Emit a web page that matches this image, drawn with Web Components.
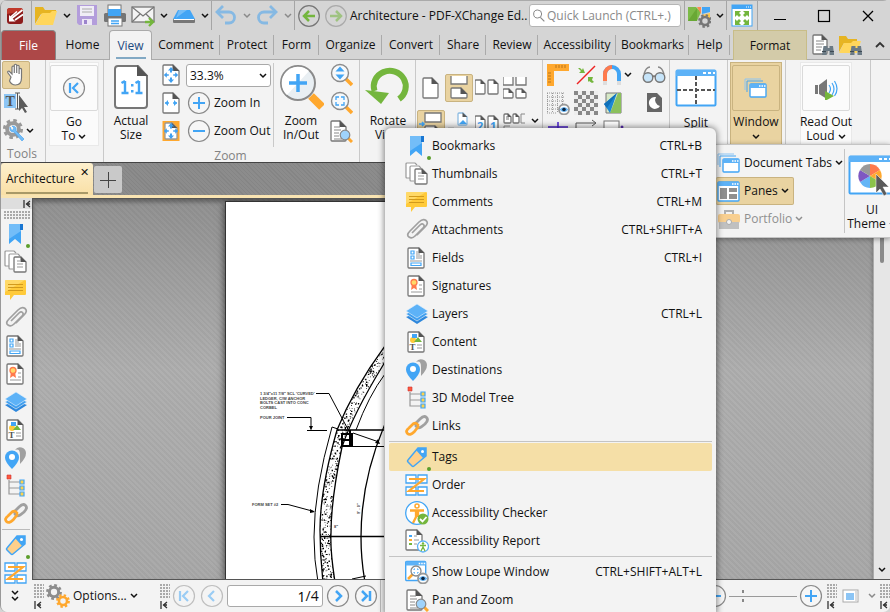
<!DOCTYPE html>
<html lang="en">
<head>
<meta charset="utf-8">
<title>Architecture - PDF-XChange Editor</title>
<style>
html,body{height:100%;margin:0;overflow:hidden;background:#d5d5d5}
body{font:12px/14px "Open Sans","Noto Sans",sans-serif;color:#111}
</style>
</head>
<body>
<px-app></px-app>
<script>
const page=(x,y,w,h,f=6,s='#777')=>`<path d="M${x+1} ${y}h${w-f-1}l${f} ${f}v${h-f-1}q0 1-1 1h${-(w-2)}q-1 0-1-1v${-(h-2)}q0-1 1-1z" fill="#fff" stroke="${s}" stroke-width="1.3"/><path d="M${x+w-f-.5} ${y-.5}v${f+.5}h${f+.8}z" fill="#555"/>`;
const moves=(c='#3f9ff0')=>`<path d="M12 4l3 3.5h-2v2h-2v-2H9zM12 20l3-3.500h-2v-2h-2v2H9zM4.800 12l3-2.800v2h2v1.600h-2v2zM19.200 12l-3-2.800v2h-2v1.600h2v2z" fill="${c}"/>`;
const lens=(x,y,r)=>`<circle cx="${x}" cy="${y}" r="${r}" fill="#f6f9fb" stroke="#8b8b8b" stroke-width="1.4"/>`;
const win=(x,y,w,h)=>`<rect x="${x}" y="${y}" width="${w}" height="${h}" rx="1" fill="#fff" stroke="#42a5f5" stroke-width="1.4"/><path d="M${x} ${y}h${w}v4h${-w}z" fill="#5db2f7"/><path d="M${x+w-7} ${y+2}h1.500m1 0h1.500m1 0h1.500" stroke="#fff" stroke-width="1.300"/>`;
const ring=(o=1)=>`<circle cx="12" cy="12" r="10.500" fill="#f6f6f6" stroke="#8a8a8a" stroke-width="1.200" opacity="${o}"/>`;
const gear=(x,y,r,c,hole='#f3f3f3')=>`<circle cx="${x}" cy="${y}" r="${r*.82}" fill="${c}"/><circle cx="${x}" cy="${y}" r="${r*.88}" fill="none" stroke="${c}" stroke-width="${r*.36}" stroke-dasharray="${r*.36} ${r*.331}"/><circle cx="${x}" cy="${y}" r="${r*.42}" fill="${hole}"/>`;
const eye='<circle cx="18" cy="18.500" r="5" fill="#fff" stroke="#999" stroke-width="1.800"/><path d="M13.500 18.500q4.500-5 9 0q-4.500 5-9 0z" fill="#69b7f5"/><circle cx="18" cy="18.500" r="1.800" fill="#0b2440"/>';
const binos='<path d="M12 22l1.500-9h4v2h2v-2h3.500l1.200 9h-4.700v-4h-3v4z" fill="#6b7a85"/><path d="M12 18.500h4m4 0h4" stroke="#3e4a54" stroke-width="1"/>';
const ICONS={
logo:'<rect x="4" y="4" width="16" height="16" rx="3" fill="#8d1c1c"/><path d="M4 10V7q0-3 3-3h10q3 0 3 3z" fill="#c0392b"/><path d="M19.500 6L8.500 14.500M14 7.500L6.500 14M20 10.500L12 16" stroke="#fff" stroke-width="1.600"/><path d="M6 11v6.500h6.500z" fill="#fff"/>',
folder:'<path d="M1 3h8l2 3h11v4H7L1 20z" fill="#e6b422"/><path d="M7 11q0-2 2-2h7l2-2h5l-4 14H1z" fill="#ffd65c"/>',
save:'<path d="M2 1h20v20H4l-2-2z" fill="#b39ddb"/><rect x="5" y="2" width="14" height="10" fill="#f0edf6"/><path d="M7 5h10M7 8h10" stroke="#aaa"/><rect x="7" y="15" width="10" height="6" fill="#ece6f5"/><rect x="9" y="16" width="3" height="4" fill="#9c84cc"/>',
print:'<rect x="5" y="1" width="13" height="8" fill="#fff" stroke="#777"/><rect x="1" y="9" width="22" height="9" rx="1.500" fill="#757575"/><path d="M5 5h13v7H5z" fill="#42a5f5"/><rect x="5" y="14" width="14" height="8" fill="#fff" stroke="#777"/><path d="M8 17h8M8 19.500h8" stroke="#42a5f5" stroke-width="1.300"/>',
mail:'<rect x="1" y="3" width="22" height="15" fill="#f4f4f4" stroke="#777" stroke-width="1.300"/><path d="M1 3l11 9 11-9M1 18l8-8M23 18l-8-8" fill="none" stroke="#777" stroke-width="1.200"/><path d="M14 18h7m-3-4l4 4-4 4" fill="none" stroke="#74b63d" stroke-width="2.300"/>',
scan:'<path d="M6 6h12l5 9H1z" fill="#42a5f5"/><path d="M7 6h8L4 14z" fill="#73bdf8"/><rect x="1" y="15" width="22" height="4" rx="1" fill="#777"/><path d="M2 15.500h20" stroke="#fff"/>',
undo:'<path d="M3 8h12a5.500 5.500 0 010 11h-4" fill="none" stroke="#86b9e3" stroke-width="2.800"/><path d="M9 2L3 8l6 6" fill="none" stroke="#86b9e3" stroke-width="2.800"/>',
redo:'<path d="M21 8H9a5.500 5.500 0 000 11h4" fill="none" stroke="#86b9e3" stroke-width="2.800"/><path d="M15 2l6 6-6 6" fill="none" stroke="#86b9e3" stroke-width="2.800"/>',
back:'<circle cx="12" cy="12" r="10.300" fill="none" stroke="#777" stroke-width="1.200"/><path d="M18 12H7m5-5l-5 5 5 5" fill="none" stroke="#74b63d" stroke-width="2.500"/>',
fwd:'<g opacity=".55"><circle cx="12" cy="12" r="10.300" fill="none" stroke="#888" stroke-width="1.200"/><path d="M6 12h11m-5-5l5 5-5 5" fill="none" stroke="#74b63d" stroke-width="2.500"/></g>',
search:'<circle cx="10" cy="9" r="6" fill="none" stroke="#888" stroke-width="1.500"/><path d="M14 14l6 6" stroke="#888" stroke-width="1.700"/>',
uiopt:'<path d="M1 3h8l5 5-4 9H1z" fill="#7cba48"/><path d="M10 3h4v7z" fill="#ff8a50"/><path d="M15 3h8v5l-8 2z" fill="#42a5f5"/><path d="M15 11l8-2v7h-8z" fill="#ffca4f"/><path d="M1 17L10 4v13z" fill="#69a835"/>'+gear(18,17,6.500,'#777','#d5d5d5'),
full:'<rect x="2" y="1" width="20" height="21" fill="#fff" stroke="#42a5f5"/><path d="M2 1h20v4H2z" fill="#42a5f5"/><path d="M16 3h1m1 0h1m1 0h1" stroke="#fff"/><path d="M5 7h6l-2 2 2 2-2 2-2-2-2 2zM19 7v6l-2-2-2 2-2-2 2-2-2-2zM5 21v-6l2 2 2-2 2 2-2 2 2 2zM19 21h-6l2-2-2-2 2-2 2 2 2-2z" fill="#74b63d"/>',
min:'<path d="M6 15.500h12" stroke="#000" stroke-width="1.200"/>',
max:'<rect x="6.500" y="6.500" width="11" height="11" fill="none" stroke="#000" stroke-width="1.200"/>',
close:'<path d="M7 7l10 10M17 7L7 17" stroke="#000" stroke-width="1.300"/>',
finddoc:page(3,2,14,19,5)+'<path d="M6 8h8M6 11h8M6 14h6M6 17h5" stroke="#888"/>'+binos,
findfold:'<path d="M1 3h7l2 3h9v4H6L1 19z" fill="#e6b422"/><path d="M6 10h7l2-2h8l-4 12H1z" fill="#ffd65c"/>'+binos,
up:'<path d="M8 14l4-4 4 4" fill="none" stroke="#333" stroke-width="1.800"/>',
hand:'<path d="M7 14l-3-4q-1-2 1-2l3 3V4q1-2 2.300 0v6V2q1.200-1.500 2.400 0v8V3q1.200-1.500 2.400 0v8V6q1.200-1.300 2.400 0v9q0 7-6 7-4 0-6-4z" fill="#fff" stroke="#777" stroke-width="1.200"/>',
text:'<rect x="0" y="3" width="12" height="14" fill="#8cc5f5"/><text x="1.500" y="15" font-family="Liberation Serif,serif" font-weight="bold" font-size="14" fill="#555">T</text><path d="M11 2h5M13.500 2v16M11 18h5" stroke="#555"/><path d="M15 4v16l3-3 3 5 2-1-3-5h4z" fill="#5b5b5b"/>',
tools:gear(11,10,9.500,'#999')+'<path d="M8 8q-1 5 4 5l8 9 2-2-8-8q1-5-4-5l2 2-2 3z" fill="#73bdf8" stroke="#3f9ff0" stroke-width=".6"/>',
first:ring()+'<path d="M8 7v10M16 7l-5 5 5 5" fill="none" stroke="#42a5f5" stroke-width="2.200"/>',
prev:ring()+'<path d="M14 7l-5 5 5 5" fill="none" stroke="#42a5f5" stroke-width="2.200"/>',
next:ring()+'<path d="M10 7l5 5-5 5" fill="none" stroke="#42a5f5" stroke-width="2.500"/>',
last:ring()+'<path d="M16 7v10M8 7l5 5-5 5" fill="none" stroke="#42a5f5" stroke-width="2.500"/>',
plus:ring()+'<path d="M12 6v12M6 12h12" stroke="#42a5f5" stroke-width="2"/>',
minus:ring()+'<path d="M6 12h12" stroke="#42a5f5" stroke-width="2"/>',
fit:page(4,2,16,20)+moves(),
fitw:page(4,2,16,20)+'<path d="M6 12h4M14 12h4" stroke="#42a5f5" stroke-width="1.500"/><path d="M6 12l3-3v6zM18 12l-3-3v6z" fill="#42a5f5"/>',
fitv:`<rect x="3.500" y="2" width="17" height="20" fill="#ffa82e"/>`+page(6,4,12,16,5,'#999')+moves(),
actual:'<path d="M6 2h20l9 10v29q0 3-3 3H6q-3 0-3-3V5q0-3 3-3z" fill="#fff" stroke="#777" stroke-width="2"/><path d="M25 1v11h11z" fill="#555"/><path d="M13 17v12M9.500 29h7M9.500 19l3.500-2M27 17v12M23.500 29h7M23.500 19l3.500-2" fill="none" stroke="#42a5f5" stroke-width="2.400"/><path d="M19 20h2.500v2.500H19zM19 26h2.500v2.500H19z" fill="#42a5f5"/>',
zoombig:'<path d="M33 32l11 11" stroke="#ffa82e" stroke-width="8"/><circle cx="20" cy="19" r="17" fill="#e9eff3" stroke="#8a8a8a" stroke-width="2"/><path d="M9 31L31 7A15 15 0 009 31z" fill="#fff"/><path d="M20 10v18M11 19h18" stroke="#42a5f5" stroke-width="3.500"/>',
zoomv:'<path d="M17 16l6 6" stroke="#ffa82e" stroke-width="3.500"/>'+lens(11,10,8.500)+'<path d="M11 3.500l4.500 5h-9zM11 16.500l4.500-5h-9z" fill="#42a5f5"/>',
zooms:'<path d="M17 16l6 6" stroke="#ffa82e" stroke-width="3.500"/>'+lens(11,10,8.500)+'<path d="M7 9V6h3M12 6h3v3M15 11v3h-3M10 14H7v-3" fill="none" stroke="#42a5f5" stroke-width="1.300"/>',
panzoom:page(2,2,15,20)+'<path d="M5 8h6M5 11h7M5 14h5M5 17h5M5 20h8" stroke="#888"/><path d="M19 19l4 4" stroke="#ffa82e" stroke-width="3"/><circle cx="16" cy="16" r="4.800" fill="#9fd3fb" stroke="#888" stroke-width="1.200"/>',
rotate:'<path d="M9.500 27A16 15.500 0 1134 35" fill="none" stroke="#74b63d" stroke-width="6"/><path d="M0 26l24 3-8 11z" fill="#74b63d"/>',
single:page(4,2,15,20),
cont:'<path d="M4 0v8h16V0" fill="#fff" stroke="#777" stroke-width="1.300"/>'+page(4,12,16,10),
two:page(0,4,10,14,4)+page(13,4,10,14,4),
four:'<path d="M0 1v8h10V1M13 1v8h10V1" fill="#fff" stroke="#777" stroke-width="1.300"/>'+page(0,13,10,9,4)+page(13,13,10,9,4),
cont2:'<path d="M6 1v9h16V1z" fill="#fff" stroke="#777" stroke-width="1.300"/>'+page(6,14,16,10)+'<path d="M0 12h5M3 10l2 2-2 2" fill="none" stroke="#42a5f5" stroke-width="1.600"/>',
layimg:page(11,1,9,12,4,'#8dbce2')+'<path d="M12 12l4-4 4 4" fill="#42a5f5"/><path d="M1 20v-4h6" fill="none" stroke="#bbb"/>',
order21:page(0,4,10,18,4)+page(13,4,10,18,4)+'<text x="2" y="18" font-size="11" font-weight="bold" font-family="Open Sans" fill="#3f9ff0">2</text><text x="15" y="18" font-size="11" font-weight="bold" font-family="Open Sans" fill="#3f9ff0">1</text>',
three:page(1,2,7,9,3)+page(10,2,6,9,3)+'<path d="M22 2h-4v9h4M1 22v-8h6" fill="none" stroke="#888"/><path d="M3 5h3M3 7h3" stroke="#777"/>',
rulers:'<path d="M1 1h22v7H8v15H1z" fill="#ffa82e"/><path d="M10 2v3M13 2v3M16 2v3M19 2v3M2 10h3M2 13h3M2 16h3M2 19h3" stroke="#b8741a"/>',
snaplines:'<path d="M3 21L21 3" stroke="#e22" stroke-width="1.400"/><path d="M4 5l2 0 2 2 1-2 2 5H5l2-2zM20 19l-2-2 1-3-5 0v5l1-1 3 2z" fill="#74b63d"/>',
magnet:'<path d="M5 22V11a7 7 0 0114 0v11" fill="none" stroke="#42a5f5" stroke-width="4"/><path d="M5 18V11a7 7 0 017-7" fill="none" stroke="#ff7a4d" stroke-width="4"/><path d="M3 18h4v4H3zM17 18h4v4h-4z" fill="#ddd"/>',
glasses:'<path d="M2 11q2-7 6-7M22 11q-2-7-6-7" fill="none" stroke="#888" stroke-width="1.500"/><circle cx="6" cy="14.500" r="4.800" fill="#c6e4f9" stroke="#777" stroke-width="1.400"/><circle cx="18" cy="14.500" r="4.800" fill="#c6e4f9" stroke="#777" stroke-width="1.400"/><path d="M10.500 14q1.500-2 3 0" fill="none" stroke="#777" stroke-width="1.300"/>',
grid:'<path d="M1 2h18M1 6h18M1 10h18M1 14h12M1 18h12M1 22h9" stroke="#999" stroke-dasharray="1 1"/><path d="M1.500 2v20M6.500 2v20M11.500 2v20M16.500 2v12" stroke="#999" stroke-dasharray="1 1"/>'+eye,
checker:'<defs><pattern id="c" width="8" height="8" patternUnits="userSpaceOnUse"><path d="M0 0h4v4H0zM4 4h4v4H4z" fill="#888"/></pattern></defs><path d="M0 0h24v24H0z" fill="#eee"/><path d="M0 0h24v24H0z" fill="url(#c)"/>',
color:'<path d="M4 2h15v20H4z" fill="#d6e8c6" stroke="#777"/><path d="M19 2v20H8L16 2z" fill="#8bc05d"/><path d="M2 13L15 2 8 22z" fill="#1b87d6"/><path d="M2 13L15 2 5 17z" fill="#0f6fb8"/>',
night:'<path d="M5 2h10l5 5v14H5z" fill="#666"/><path d="M14 6a6 6 0 104 9 6 6 0 01-4-9z" fill="#fff"/>',
cross:'<path d="M2 8h20M12 3v18" stroke="#4a1fd0" stroke-width="1.500"/>',
arrows:'<path d="M2 22V4h19m-3-3l4 3-4 3" fill="none" stroke="#555"/>',
shape:'<rect x="2" y="2" width="15" height="14" fill="#fff" stroke="#777"/><circle cx="20" cy="8" r="1.500" fill="#5a2fb0"/>',
split:'<rect x="1.500" y="1.500" width="39" height="35" rx="1" fill="#fff" stroke="#42a5f5" stroke-width="2"/><path d="M1 1h40v6H1z" fill="#5db2f7"/><path d="M28 4h3m2 0h3m2 0h2" stroke="#fff" stroke-width="2"/><path d="M21 7v30M2 21h38" stroke="#555" stroke-width="2" stroke-dasharray="4 2"/>',
windows:'<path d="M1 14V3h16" fill="none" stroke="#8cc5f5"/><path d="M3 16V5h16" fill="none" stroke="#42a5f5"/>'+win(6,8,16,13),
sound:'<path d="M1 9h3v9H1z" fill="#777"/><path d="M5 9l8-6v20l-8-5z" fill="#777"/><path d="M15 9q3 4 0 8M18 7q4 6 0 12M20.500 5q5 8 0 15" fill="none" stroke="#42a5f5" stroke-width="1.200"/><path d="M11 15l9 5-9 5z" fill="#74b63d"/>',
panes:win(1,3,21,19)+'<path d="M3 9h7v11H3zM12 9h8v4h-8zM12 15h8v5h-8z" fill="#8f8f8f"/>',
portfolio:'<path d="M8 7V4h8v3" fill="none" stroke="#b0b0b0" stroke-width="2"/><rect x="1" y="7" width="22" height="9" rx="2" fill="#f8cf90"/><path d="M2 15h20v7H2z" fill="#c0c0c0"/><circle cx="12" cy="15" r="2.500" fill="#f3f3f3" stroke="#aaa"/>',
theme:'<rect x="1.500" y="1.500" width="45" height="37" rx="1" fill="#fff" stroke="#42a5f5" stroke-width="2"/><path d="M1 1h46v6H1z" fill="#5db2f7"/><path d="M31 4h3m2 0h3m2 0h3" stroke="#fff" stroke-width="2"/><path d="M22 21V9a12 12 0 0110 6z" fill="#ff7a4d"/><path d="M22 21l10-6a12 12 0 010 12z" fill="#ffa82e"/><path d="M22 21l10 6a12 12 0 01-10 6z" fill="#8bc34a"/><path d="M22 21v12a12 12 0 01-10-6z" fill="#64b5f6"/><path d="M22 21l-10 6a12 12 0 010-12z" fill="#7e57c2"/><path d="M22 21l-10-6a12 12 0 0110-6z" fill="#999"/><path d="M28 19v19l4-4 4 7 3-2-4-7h6z" fill="#5b5b5b" stroke="#fff" stroke-width=".5"/>',
bookmark:'<path d="M5 2h12v20l-6-5-6 5z" fill="#42a5f5"/><path d="M5 2h12v7L5 17z" fill="#73bdf8"/><path d="M16 2h3v6h-3z" fill="#1976d2"/>',
thumbs:'<path d="M6 16H2q-1 0-1-1V2q0-1 1-1h8l2 2" fill="#fff" stroke="#999" stroke-width="1.200"/><path d="M9 19H6q-1 0-1-1V5q0-1 1-1h8l2 2" fill="#fff" stroke="#999" stroke-width="1.200"/>'+page(10,7,12,15,5)+'<path d="M13 14h6M13 17h6M13 11h3" stroke="#999"/>',
comment:'<path d="M2 2h19q1 0 1 1v13q0 1-1 1H10l-4 5v-5H1V3z" fill="#ffca3a"/><path d="M2 2h19L1 14V3z" fill="#ffd968"/><path d="M4 6.500h15M4 9.500h15M4 12.500h15" stroke="#d19a1d"/>',
clip:'<path d="M7 15l8-8q2-2 3.500-.5t-.5 3.500l-8 8q-3 3-6 1t1-6L14 4q4-4 7-1.500t-1 6.500l-8 8" fill="none" stroke="#a0a0a0" stroke-width="1.700"/>',
fields:page(3,2,16,20,5)+'<path d="M6 5h3v3H6zM6 10h3v3H6zM6 17h10v2.500H6z" fill="none" stroke="#42a5f5" stroke-width="1.200"/><path d="M11 6h3M11 8h4M11 10h6M11 12h6M5 15h12" stroke="#999"/>',
sign:page(3,2,16,20,5)+'<path d="M7 10l-1 6 3-2 3 2-1-6z" fill="#ff7a4d"/><circle cx="9" cy="8.500" r="3" fill="#ffd968" stroke="#ff7a4d" stroke-width="1.300"/><path d="M14 11h3M14 15h3M6 18h11" stroke="#999"/>',
layers:'<path d="M1 15l11 7 11-7-11-4z" fill="#2d87dc"/><path d="M1 12l11 7 11-7-11-6z" fill="#3f9ff0" stroke="#f3f3f3" stroke-width=".6"/><path d="M1 9l11-7 11 7-11 7z" fill="#5db2f7" stroke="#e8f2fb" stroke-width=".6"/>',
content:page(3,2,16,20,5)+'<circle cx="8" cy="10" r="3" fill="#ffca3a"/><path d="M7 4h5v4H7z" fill="#42a5f5"/><path d="M9 12l4-5 4 5z" fill="#74b63d"/><text x="4.500" y="20" font-size="9" font-family="Liberation Serif,serif" font-weight="bold" fill="#555">T</text><path d="M12 15h5M12 18h5" stroke="#999"/>',
dest:'<path d="M16 18q6-6 6-11a6 6 0 00-11-3q5-2 5 5z" fill="#a0a0a0"/><path d="M8 23Q1 16 1 11.500a7 7 0 0114 0Q15 16 8 23z" fill="#42a5f5"/><circle cx="8" cy="11" r="3" fill="#fff"/>',
tree:'<path d="M5 6v14h11M5 8h11M5 14h11" fill="none" stroke="#999" stroke-width="1.200"/><path d="M3 1h4v4H3z" fill="#ff5a3d" stroke="#c33" stroke-width=".6"/><path d="M16 6h4v4h-4zM16 12h4v4h-4zM16 18h4v4h-4z" fill="#ffd24a" stroke="#42a5f5" stroke-width="1.200"/>',
link:'<g fill="none" stroke-width="2.800" stroke-linecap="round"><path d="M10 11l5-5q4-4 6.500-1.500T20 11l-4 3q-3 2-5-1" stroke="#a0a0a0" transform="translate(0 -1)"/><path d="M13 13l-4 5q-4 4-6.500 1.500T4 14l4-4q3-2 5 1" stroke="#ffa82e"/></g>',
tag:'<path d="M21 3v8L9 21q-1 1-2 0l-4-4q-1-1 0-2L13 3z" fill="#ffd08a" stroke="#42a5f5" stroke-width="1.500"/><path d="M13 3h8v8l-3 2-7-8z" fill="#42a5f5"/><circle cx="17.500" cy="6.500" r="1.500" fill="#fff"/>',
order:'<path d="M1 2h10v8H1zM13 2h9v8h-9zM1 14h10v8H1zM13 14h9v8h-9z" fill="#fff" stroke="#42a5f5" stroke-width="1.300"/><path d="M4 6h15L4 18h15" fill="none" stroke="#ffa82e" stroke-width="2.200"/>',
access:'<circle cx="12" cy="12" r="11.300" fill="#fff" stroke="#42a5f5" stroke-width="1.300"/><circle cx="12" cy="5" r="2" fill="#fff" stroke="#ffa82e" stroke-width="1.500"/><path d="M5 9.500h14M11 10v6l-3 6M13 10v6" fill="none" stroke="#ffa82e" stroke-width="2.300"/><circle cx="18" cy="18" r="5.500" fill="#74b63d"/><path d="M15 18l2.500 2.500 4-4.500" fill="none" stroke="#fff" stroke-width="1.800"/>',
report:page(1,1,16,20,5)+'<path d="M4 6h3v2H4z" fill="#42a5f5"/><path d="M4 10h3v2H4z" fill="#ffa82e"/><path d="M4 14h3v2H4z" fill="#74b63d"/><path d="M9 7h3M9 11h5M9 15h3" stroke="#999"/><circle cx="18" cy="17.500" r="5.500" fill="#fff" stroke="#5db2f7" stroke-width="1.300"/><circle cx="18" cy="14.500" r="1.200" fill="#74b63d"/><path d="M15 16.500h6M18 16v2l-2 4M18 18l2 4" fill="none" stroke="#74b63d" stroke-width="1.300"/>',
loupe:win(.7,1.5,20,19)+'<path d="M8 14l-5 5" stroke="#ffa82e" stroke-width="2.500"/><circle cx="11" cy="11" r="5" fill="#fff" stroke="#888" stroke-width="1.300"/><path d="M9 10V9h1M12 9h1v1M13 12v1h-1M10 13H9v-1" fill="none" stroke="#42a5f5"/>'+eye,
gears:gear(8,8,7.500,'#8d8d8d')+gear(17,17,6.500,'#ffa82e'),
layout:'<rect x="4" y="6" width="15" height="12" fill="#fff" stroke="#aaa"/><path d="M7 9h8v7H7z" fill="#8cc5f5"/><path d="M17 7v10" stroke="#bbb"/>'
};
const BASE=`*{box-sizing:border-box}button{font:inherit;color:inherit;background:none;border:0;padding:0;margin:0;text-align:center;white-space:nowrap}`;
class Px extends HTMLElement{
  connectedCallback(){ if(this.shadowRoot)return; this.attachShadow({mode:'open'}).innerHTML='<style>'+BASE+(this.css()||'')+'</style>'+this.html(); }
  a(n,d=''){ return this.getAttribute(n)??d; }
}
const def=(n,html,css)=>customElements.define(n,class extends Px{html(){return html.call(this)}css(){return typeof css==='function'?css.call(this):css}});

def('px-icon',function(){return `<svg viewBox="0 0 ${this.a('box','24 24')}" aria-hidden="true">${ICONS[this.a('name')]||''}</svg>`},
 function(){const [w,h]=this.a('box','24 24').split(' ');return `:host{display:block;flex:none;width:${w}px;height:${h}px}svg{display:block;width:100%;height:100%}`});
def('px-chev',()=>'<svg width="8" height="6" viewBox="0 0 8 6"><path d="M1 1l3 3 3-3" fill="none" stroke="currentColor" stroke-width="1.500"/></svg>',':host{display:inline-block;flex:none;width:8px;height:6px}svg{display:block}');
def('px-sep',()=>'',':host{display:block;flex:none;width:1px;align-self:stretch;background:var(--line,#a5a5a5)}');
def('px-btn',function(){const n=this.a('name');return `<button aria-label="${this.a('label',n)}"><px-icon name="${n}"></px-icon></button>`+(this.hasAttribute('menu')?'<button class="m" aria-label="More"><px-chev></px-chev></button>':'')},
 ':host{display:flex;flex:none;align-items:center}button{width:var(--bw,28px);height:28px;display:flex;align-items:center;justify-content:center}.m{width:13px}:host([on]) button:not(.m){background:#e9d3a1;border:1px solid #c9b380;border-radius:2px}:host([dim]){color:#8a8a8a}:host([soft]) px-icon{opacity:.5}');
def('px-text-btn',function(){return `<button><px-icon name="${this.a('name')}"></px-icon><span><slot></slot></span>${this.hasAttribute('menu')?'<px-chev></px-chev>':''}</button>`},
 ':host{display:flex;height:28px}button{display:flex;align-items:center;gap:3px;padding:0 4px 0 1px;border:1px solid transparent;border-left:0}:host([on]) button{background:#e9d3a1;border-color:#c9b380;border-radius:2px}:host([dim]) button{color:#8f8f8f}');
def('px-big',function(){return `<button><span class="i"><px-icon name="${this.a('name')}" box="${this.a('box','24 24')}"></px-icon></span><span class="t"><slot></slot></span></button>`},
 `:host{display:flex;flex:none}button{display:flex;flex-direction:column;align-items:center;width:var(--w,52px);height:84px;padding:2px;border:1px solid transparent}
 .i{display:flex;align-items:center;justify-content:center;width:48px;height:48px;margin-bottom:4px}
 :host([framed]) button{background:#fbfbfb;border-color:#e9e9e9}:host([framed]) .i{border:1px solid #dadada;border-radius:2px}
 :host([framed][on]) button{background:#e9d3a1;border-color:#c9b380}:host([framed][on]) .i{border-color:#c9b380}`);

def('px-title-bar',()=>`
 <px-icon class="logo" name="logo"></px-icon><px-sep></px-sep>
 <px-btn name="folder" menu></px-btn><px-btn name="save"></px-btn><px-btn name="print"></px-btn><px-btn name="mail" menu></px-btn><px-btn name="scan" menu></px-btn><px-sep></px-sep>
 <px-btn name="undo" menu dim></px-btn><px-btn name="redo" menu dim></px-btn><px-sep></px-sep>
 <div class="nav"><px-btn name="back"></px-btn><px-btn name="fwd"></px-btn></div>
 <h1>Architecture - PDF-XChange Ed..</h1>
 <label><px-icon name="search"></px-icon><input type="text" aria-label="Quick Launch" placeholder="Quick Launch (CTRL+.)"></label>
 <px-sep class="gap"></px-sep><px-btn name="uiopt" menu></px-btn><px-sep></px-sep><px-btn class="wide" name="full"></px-btn><px-sep></px-sep>
 <div class="wc"><button aria-label="Minimize"><px-icon name="min"></px-icon></button><button aria-label="Maximize"><px-icon name="max"></px-icon></button><button aria-label="Close"><px-icon name="close"></px-icon></button></div>`,
 `:host{display:flex;align-items:center;height:30px;background:#d5d5d5;border-top:1px solid #aaa}
 .logo{margin:0 4px 0 2px}.nav{display:flex;--bw:27px}.wide{--bw:30px}h1{flex:1;min-width:0;font:inherit;margin:0 0 0 1px;white-space:nowrap}
 label{display:flex;align-items:center;flex:none;width:152px;height:23px;background:#fff;border:1px solid #b5b5b5;border-radius:3px}
 label px-icon{width:16px;height:16px;margin-left:1px}input{min-width:0;flex:1;border:0;padding:0;background:none;font:inherit;outline:0}input::placeholder{color:#8a8a8a}
 .gap{margin-left:3px}.wc{display:flex}.wc button{width:44px;height:28px;display:flex;align-items:center;justify-content:center}`);

def('px-tabs',()=>`<nav><button class="file">File</button>${['Home','View','Comment','Protect','Form','Organize','Convert','Share','Review','Accessibility','Bookmarks','Help'].map(t=>`<button class="${t==='View'?'on':/Home/.test(t)?'':'line'}">${t}</button>`).join('')}<button class="fmt">Format</button></nav><div class="r"><px-btn name="finddoc"></px-btn><px-btn name="findfold"></px-btn></div><button class="up" aria-label="Collapse ribbon"><px-icon name="up"></px-icon></button>`,
 `:host{display:flex;height:30px;background:#d5d5d5;border-bottom:1px solid #aaa}
 nav{display:grid;grid-template-columns:55px 53px 43px 68px 54px 45px 63px 58px 46px 52px 78px 73px 41px 77px;height:30px}
 nav button{position:relative;display:flex;align-items:center;justify-content:center}
 .line{background:linear-gradient(#aaa,#aaa) right 5px/1px 20px no-repeat}
 .file{background:#ad4848;color:#fff;border-radius:4px 4px 0 0;border:1px solid #888;border-bottom:0}
 .on{background:linear-gradient(#82a9c4,#82a9c4) center 26px/30px 2px no-repeat,#f3f3f3;color:#1c4a80;border:1px solid #aaa;border-bottom:0;border-radius:4px 4px 0 0}
 .fmt{background:#d3cba9;border:1px solid #c8bd88;border-bottom:0;margin-left:3px}
 .r{display:flex;align-items:center;margin-left:1px}.up{margin-left:auto;width:20px;display:flex;justify-content:center;align-items:center}`);

def('px-group',function(){return `<div class="c"><slot></slot></div>${this.a('label')?`<div class="l">${this.a('label')}</div>`:''}`},
 `:host{display:flex;flex-direction:column;flex:none;border-right:1px solid #c9c9c9;padding:1px 3px 0;height:102px}
 .c{display:flex;gap:var(--gap,4px)}.l{text-align:center;color:#828282;line-height:18px}`);
def('px-grid',()=>'<slot></slot>',':host{display:grid;grid-template-columns:repeat(var(--cols,1),28px);grid-auto-rows:28px;align-content:start}');

def('px-ribbon',()=>`
 <px-group label="Tools" class="tools"><px-grid><px-btn name="hand" on></px-btn><px-btn name="text"></px-btn><px-btn name="tools" menu></px-btn></px-grid></px-group>
 <px-group class="goto"><px-big framed name="first">Go<br>To <px-chev></px-chev></px-big></px-group>
 <px-group label="Zoom" class="zoom"><px-big name="actual" box="38 46">Actual<br>Size</px-big>
  <px-grid><px-btn name="fit"></px-btn><px-btn name="fitw"></px-btn><px-btn name="fitv"></px-btn></px-grid>
  <div class="z"><select aria-label="Zoom level"><option>33.3%</option></select><px-chev></px-chev><px-text-btn name="plus">Zoom In</px-text-btn><px-text-btn name="minus">Zoom Out</px-text-btn></div>
  <px-sep></px-sep><px-big name="zoombig" box="46 46" class="zb">Zoom<br>In/Out</px-big>
  <px-grid><px-btn name="zoomv"></px-btn><px-btn name="zooms"></px-btn><px-btn name="panzoom"></px-btn></px-grid></px-group>
 <px-group class="rot"><px-big name="rotate" box="46 46">Rotate<br>View</px-big></px-group>
 <px-group class="lay"><px-grid style="--cols:4"><px-btn name="single"></px-btn><px-btn name="cont" on></px-btn><px-btn name="two"></px-btn><px-btn name="four"></px-btn><px-btn name="cont2" on></px-btn><px-btn name="layimg"></px-btn><px-btn name="order21"></px-btn><px-btn name="three"></px-btn></px-grid><px-chev></px-chev></px-group>
 <px-group class="guides"><px-grid style="--cols:3"><px-btn name="rulers"></px-btn><px-btn name="snaplines"></px-btn><px-btn name="magnet" menu></px-btn><px-btn name="grid"></px-btn><px-btn name="checker"></px-btn><px-btn name="color"></px-btn><px-btn name="cross"></px-btn><px-btn name="arrows"></px-btn><px-btn name="shape"></px-btn></px-grid><px-grid><px-btn name="glasses"></px-btn><px-btn name="night"></px-btn></px-grid></px-group>
 <px-group class="split"><px-big name="split" box="42 38">Split</px-big></px-group>
 <px-group class="win"><px-big framed on name="windows">Window<br><px-chev></px-chev></px-big></px-group>
 <px-group class="read"><px-big framed name="sound">Read Out<br>Loud <px-chev></px-chev></px-big></px-group>`,
 `:host{display:flex;height:102px;background:#f3f3f3;overflow:hidden}
 .tools{width:45px;padding-left:1px}.goto{width:58px;--w:50px}.goto px-big,.win px-big,.read px-big{margin-top:1px}.zoom{width:256px;--gap:0px;padding-left:1px}
 .z{position:relative;display:flex;flex-direction:column;width:85px;margin-left:1px}.z select{appearance:none;height:23px;margin:3px 0 2px;width:85px;border:1px solid #a9a9a9;border-radius:3px;background:#fff;font:inherit;padding:0 3px;color:inherit}
 .z>px-chev{position:absolute;right:4px;top:12px}.zoom px-sep{margin:2px 1px 0 2px;--line:#c9c9c9;height:84px;align-self:auto}.zb{--w:52px}
 .rot{width:56px;padding-left:2px}.lay{width:127px;padding:10px 0 0 1px}.lay px-chev{margin:48px 0 0 -2px}.lay px-grid{grid-auto-rows:36px}
 .guides{width:127px;padding-left:1px}.guides px-grid+px-grid{margin-left:8px}.split{width:58px;padding-left:0}.win{width:58px;padding:1px 2px}.read{width:85px;padding:1px 0 0 14px}`);

def('px-doc-tabs',()=>`<div class="t"><span>Architecture</span><button aria-label="Close tab">✕</button></div><button class="add" aria-label="New tab"><svg width="16" height="16"><path d="M8.500 0v16M0 8.500h16" stroke="#444"/></svg></button>`,
 `:host{display:flex;align-items:flex-start;height:36px;background:repeating-linear-gradient(45deg,#858585 0 1px,#8c8c8c 1px 3px);border-top:1px solid #444;border-bottom:3px solid #f9e4b2}
 .t{position:relative;display:flex;width:92px;height:32px;padding:9px 0 0 5px;background:linear-gradient(#a89968,#a89968) 5px 29px/82px 2px no-repeat,linear-gradient(#fdf0cd,#f9e0a6);border-radius:3px 3px 0 0}
 .t button{margin-left:auto;width:18px;height:14px;margin-top:-7px;font-size:11px;line-height:12px}
 .add{display:flex;align-items:center;justify-content:center;width:28px;height:27px;margin:3px 0 0 1px;background:#c9c9c9;border-radius:2px}`);

const PANES=['bookmark','thumbs','comment','clip','fields','sign','layers','content','dest','tree','link'];
def('px-pane-bar',()=>`<div class="h"><px-stop></px-stop></div><div class="grip"></div>${PANES.map(n=>`<button aria-label="${n}" class="${n}"><px-icon name="${n}"></px-icon></button>`).join('')}<hr><button aria-label="tags" class="tag"><px-icon name="tag"></px-icon></button><button aria-label="order"><px-icon name="order"></px-icon></button><button class="more" aria-label="More panes"><px-chev></px-chev><px-chev></px-chev></button>`,
 `:host{display:flex;flex-direction:column;width:31px;flex:none;background:#f3f3f3;overflow:hidden}
 .h{height:11px;background:#dedede;display:flex;justify-content:flex-end;flex:none;padding-right:1px}.grip{height:9px;flex:none;margin:2px 2px 0 3px;background:radial-gradient(circle at 1px 1px,#aaa 0 .8px,transparent 1px) 0 0/3px 3px}
 button{position:relative;height:28px;flex:none;display:flex;align-items:center;justify-content:center;padding-right:1px}
 .bookmark::after,.tag::after{content:"";position:absolute;right:2px;bottom:0;width:4px;height:4px;border-radius:2px;background:#5c9e2b}
 hr{width:28px;margin:1px;border:0;border-top:1px solid #bbb;flex:none}.more{height:18px;flex-direction:column;padding-right:4px}`);
def('px-stop',()=>'<svg width="8" height="8" viewBox="0 0 8 8"><path d="M1 0v8M7 1L3.500 4 7 7M3 4h4" fill="none" stroke="#333" stroke-width="1.300"/></svg>',':host{display:block;height:8px;width:8px;margin-top:2px}svg{display:block}');

def('px-drawing',function(){
 let s=7,r=()=>(s=(s*16807)%2147483647)/2147483647,d='';
 for(let i=0;i<1300;i++){const y=345+r()*235,c=y<430?338+(430-y)*.57:321+Math.pow((530-y)/100,2)*17;const x=c-3+r()*28,w=r()<.3?1.4:.8;d+=`M${x.toFixed(1)} ${y.toFixed(1)}h${w}v${w}h-${w}z`}
 return `<svg viewBox="227 202 158 378" role="img" aria-label="Curved wall plan">
 <defs><clipPath id="w"><path d="M386 346Q355 390 338 430 321 490 321 530 321 555 324 582L336 582Q331 550 332 533 332 500 343 447 353 410 386 362z"/></clipPath></defs>
 <path d="${d}" clip-path="url(#w)" fill="#000"/>
 <g fill="none" stroke="#000"><path d="M386 346Q355 388 338 430 321 490 321 530 321 555 324 582M386 362Q354 414 343 447 332 500 332 533 331 550 336 582" stroke-width="1.300"/>
 <path d="M333 427Q315 490 315 537 315 560 319 582M333 427l6 2M386 374Q370 395 357 430"/><path d="M386 424Q362 480 362 537 362 560 366 582" stroke-width="1.300"/>
 <path d="M338 430h48M321 536.500h65" stroke-width="1.300"/><path d="M343 446.500h43M317 393.500h13l19 36M288 417.500h24v12M308 430.500h20M282 504.500h7l26 7M354 433l26 9M353 579l14-3"/><path d="M343 434h10v12h-10zM344 440h9M351 430v16" stroke-width="2"/><path d="M253 579.500h24" stroke="#555" stroke-dasharray="3 1"/></g>
 <path d="M310 426h4l-2 4zM311 509l5 3-5 1zM379 439l2 5-5-1z"/>
 <g font-family="Liberation Sans,sans-serif" font-weight="bold" font-size="4" fill="#444"><text x="261" y="395">1 3/4"x11 7/8" SCL 'CURVED'</text><text x="261" y="400">LEDGER, C/W ANCHOR</text><text x="261" y="404">BOLTS CAST INTO CONC</text><text x="261" y="409">CORBEL</text><text x="261" y="419">POUR JOINT</text><text x="253" y="506">FORM SET #2</text><text x="335" y="528">8"</text><text transform="translate(361 514) rotate(-90)">9' - 0"</text></g></svg>`},
 ':host{display:block}svg{display:block;width:158px;height:378px}');
def('px-viewport',()=>`<div class="v"><div class="p"><px-drawing></px-drawing></div></div><div class="s"><i></i><b><px-chev></px-chev></b></div>`,
 `:host{display:flex;flex:1;min-height:0;border:1px solid #555;border-width:1px 0 1px 1px}
 .v{flex:1;overflow:hidden;padding-top:3px;background:repeating-linear-gradient(45deg,#0000 0 2px,#0000000a 2px 4px),linear-gradient(#929292,#b0b0b0 45%,#aaa);box-shadow:inset 0 3px 4px #0005}
 .p{width:54%;height:100%;margin:0 auto;background:#fff;outline:1px solid #333;box-shadow:0 2px 8px 1px #000a;overflow:hidden}
 .s{width:17px;background:#e6e6e6;display:flex;flex-direction:column;align-items:center;padding-top:10px;border-left:1px solid #aaa}.s i{width:4px;height:54px;background:#8a8a8a;border-radius:2px}.s b{margin-top:auto;height:14px;line-height:8px}`);

def('px-status',()=>`<px-grip></px-grip><button class="o"><px-icon name="gears"></px-icon>Options...<px-chev></px-chev></button><px-grip></px-grip>
 <px-btn name="first" soft></px-btn><px-btn name="prev" soft></px-btn><label><input aria-label="Page" value="1"><span>/4</span></label><px-btn name="next"></px-btn><px-btn name="last"></px-btn><px-sep></px-sep>
 <div class="z"><px-btn name="minus"></px-btn><input type="range" aria-label="Zoom" value="20"><px-btn name="plus"></px-btn></div><px-grip></px-grip><px-btn name="layout" menu dim></px-btn><px-grip></px-grip>`,
 `:host{display:flex;align-items:center;height:32px;background:#f3f3f3;--line:#bbb}
 .o{display:flex;align-items:center;gap:3px;margin-left:2px;padding-right:20px}
 label{display:flex;align-items:center;width:96px;height:22px;margin:0 1px;background:#fff;border:1px solid #a9a9a9;border-radius:3px;padding-right:3px;font-size:14px}
 label input{flex:1;min-width:0;border:0;background:none;text-align:right;font:inherit;padding:0}
 .z{display:flex;align-items:center;margin-left:auto}input[type=range]{appearance:none;width:68px;height:16px;margin:0;background:linear-gradient(#999,#999) center/100% 1px no-repeat}
 input[type=range]::-webkit-slider-thumb{appearance:none;width:2px;height:12px;background:linear-gradient(#888 0 3px,#0000 3px 9px,#888 9px)}`);
def('px-grip',()=>'<div></div><px-stop></px-stop>',':host{display:block;width:10px;flex:none;margin-left:2px}div{height:15px;background:radial-gradient(circle at 1px 1px,#aaa 0 .8px,transparent 1px) 0 0/3px 3px}');

def('px-menu-item',function(){return `<button role="menuitem"><px-icon name="${this.a('icon')}"></px-icon><span><slot></slot></span><kbd>${this.a('keys')}</kbd></button>`},
 `:host{display:block}button{position:relative;display:flex;align-items:center;gap:3px;width:100%;height:28px;padding:0 10px 0 16px;text-align:left}span{flex:1}kbd{font:inherit}
 :host([on]) button{background:#f5dfa7;border-radius:2px}:host([dot]) button::after{content:"";position:absolute;left:38px;bottom:0;width:4px;height:4px;border-radius:2px;background:#5c9e2b}`);
def('px-menu',()=>{const I=(i,t,k='',x='')=>`<px-menu-item icon="${i}" keys="${k}" ${x}>${t}</px-menu-item>`;return '<div role="menu">'+I('bookmark','Bookmarks','CTRL+B','dot')+I('thumbs','Thumbnails','CTRL+T')+I('comment','Comments','CTRL+M')+I('clip','Attachments','CTRL+SHIFT+A')+I('fields','Fields','CTRL+I')+I('sign','Signatures')+I('layers','Layers','CTRL+L')+I('content','Content')+I('dest','Destinations')+I('tree','3D Model Tree')+I('link','Links')+'<hr>'+I('tag','Tags','','on dot')+I('order','Order')+I('access','Accessibility Checker')+I('report','Accessibility Report')+'<hr>'+I('loupe','Show Loupe Window','CTRL+SHIFT+ALT+L')+I('panzoom','Pan and Zoom')+'</div>'},
 `:host{display:block;background:#f3f3f3;border-radius:6px 6px 0 0;box-shadow:0 0 6px 1px #0007;padding:4px 4px 0}hr{margin:1px 0;border:0;border-top:1px solid #c4c4c4}`);
def('px-window-panel',()=>`<div class="c"><px-text-btn name="windows" menu>Document Tabs</px-text-btn><px-text-btn name="panes" menu on>Panes</px-text-btn><px-text-btn name="portfolio" menu dim>Portfolio</px-text-btn></div><px-sep></px-sep><px-big name="theme" box="48 42">UI<br>Theme <px-chev></px-chev></px-big>`,
 `:host{display:flex;overflow:hidden;background:#f3f3f3;box-shadow:0 1px 5px #0006;border:1px solid #c4c4c4;border-right:0;--line:#c4c4c4}.c{width:128px;flex:none;padding-top:4px}px-sep{margin:4px 0}px-big{--w:50px;margin:5px 0 0 2px}`);

def('px-app',()=>`<px-title-bar></px-title-bar><px-tabs></px-tabs><px-ribbon></px-ribbon><px-doc-tabs></px-doc-tabs>
 <main><px-pane-bar></px-pane-bar><section><px-viewport></px-viewport><px-status></px-status></section></main>
 <px-window-panel></px-window-panel><px-menu></px-menu>`,
 `:host{position:relative;display:flex;flex-direction:column;height:100vh;border-left:1px solid #999;border-radius:7px;overflow:hidden;box-sizing:border-box}
 px-title-bar,px-tabs,px-ribbon,px-doc-tabs{flex:none;min-width:0}main{display:flex;flex:1;min-height:0}section{display:flex;flex-direction:column;flex:1;min-width:0}
 px-window-panel{position:absolute;left:714px;right:0;top:144px;height:94px}px-menu{position:absolute;left:384px;top:128px;width:331px;box-sizing:border-box}`);
</script>
</body>
</html>
